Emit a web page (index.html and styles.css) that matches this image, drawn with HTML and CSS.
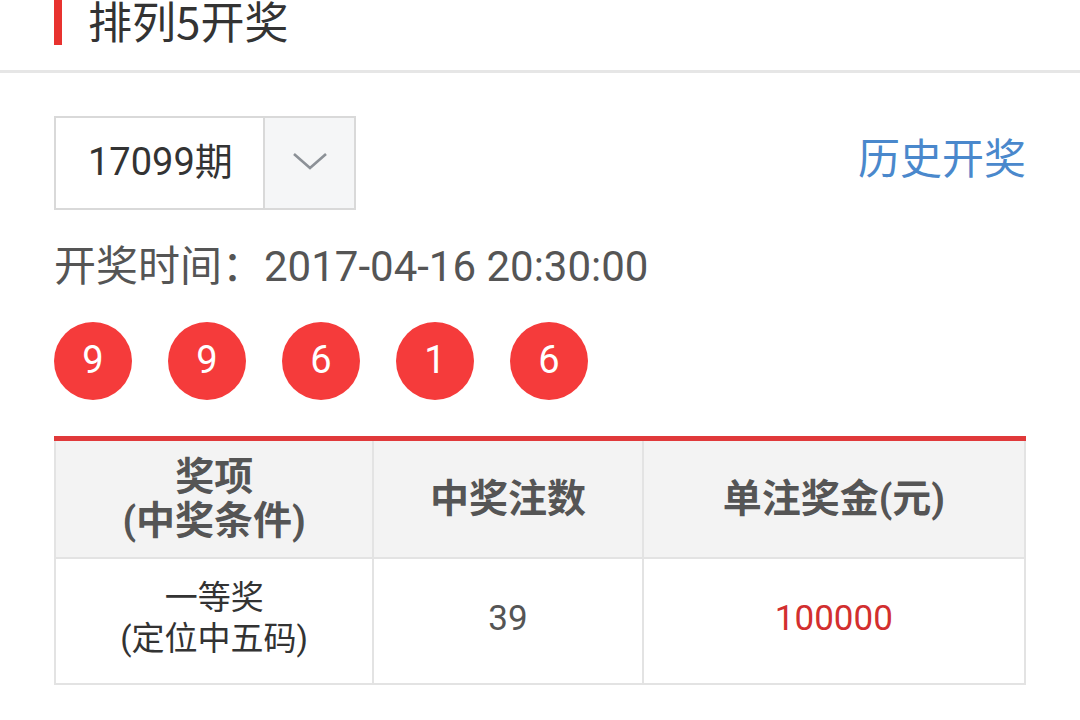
FILE: index.html
```html
<!DOCTYPE html>
<html lang="zh-CN">
<head>
<meta charset="utf-8">
<title>排列5开奖</title>
<link rel="stylesheet" href="styles.css">
</head>
<body>
<header class="head">
  <span class="head-bar"></span>
  <h1 class="head-title">排列5开奖</h1>
</header>
<main class="content">
  <div class="toolbar">
    <div class="select">
      <span class="select-value">17099期</span>
      <span class="select-btn">
        <svg width="36" height="20" viewBox="0 0 36 20"><path d="M2 3 L18 17 L34 3" fill="none" stroke="#8c9197" stroke-width="2.6"/></svg>
      </span>
    </div>
    <a class="history">历史开奖</a>
  </div>
  <p class="time">开奖时间：2017-04-16 20:30:00</p>
  <div class="balls">
    <span class="ball">9</span>
    <span class="ball">9</span>
    <span class="ball">6</span>
    <span class="ball">1</span>
    <span class="ball">6</span>
  </div>
  <table class="prize">
    <colgroup>
      <col class="c1"><col class="c2"><col class="c3">
    </colgroup>
    <thead>
      <tr><th>奖项<br>(中奖条件)</th><th>中奖注数</th><th>单注奖金(元)</th></tr>
    </thead>
    <tbody>
      <tr><td class="cell-name">一等奖<br>(定位中五码)</td><td class="cell-count">39</td><td class="cell-money">100000</td></tr>
    </tbody>
  </table>
</main>
</body>
</html>
```
FILE: styles.css
```css
html, body {
  margin: 0;
  padding: 0;
  background: #ffffff;
  font-family: Roboto, "Noto Sans CJK SC", sans-serif;
  color: #333333;
}
.head {
  display: flex;
  align-items: flex-start;
  height: 45px;
  padding: 0 0 25px 54px;
  border-bottom: 3px solid #e6e6e6;
}
.head-bar {
  width: 8px;
  height: 45px;
  background: #e8322f;
}
.head-title {
  margin: 0 0 0 26px;
  font-family: "Noto Sans CJK SC", sans-serif;
  font-weight: 400;
  font-size: 44px;
  line-height: 40px;
  color: #333333;
}
.content {
  padding: 43px 54px 0 54px;
}
.toolbar {
  display: flex;
  justify-content: space-between;
  align-items: center;
}
.select {
  display: flex;
  height: 90px;
  border: 2px solid #d9d9d9;
  width: 298px;
}
.select-value {
  width: 209px;
  border-right: 2px solid #d9d9d9;
  display: flex;
  align-items: center;
  padding-left: 32px;
  padding-bottom: 10px;
  box-sizing: border-box;
  font-size: 38px;
  color: #333333;
}
.select-btn {
  flex: 1;
  background: #f5f6f7;
  display: flex;
  align-items: center;
  justify-content: center;
  padding-bottom: 4px;
}
.history {
  font-family: "Noto Sans CJK SC", sans-serif;
  font-size: 42px;
  line-height: 50px;
  color: #4a88cc;
  margin-bottom: 14px;
}
.time {
  margin: 29px 0 0 0;
  font-size: 42px;
  line-height: 56px;
  color: #555555;
}
.balls {
  display: flex;
  gap: 36px;
  margin-top: 27px;
}
.ball {
  width: 78px;
  height: 78px;
  border-radius: 50%;
  background: #f53b3b;
  color: #ffffff;
  font-size: 38px;
  display: flex;
  align-items: center;
  justify-content: center;
  padding-bottom: 2px;
  box-sizing: border-box;
}
.prize {
  margin-top: 36px;
  width: 972px;
  border-collapse: collapse;
  border-top: 5px solid #e0393a;
}
.c1 { width: 319px; }
.c2 { width: 270px; }
.c3 { width: 383px; }
.prize th, .prize td {
  border: 2px solid #e3e3e3;
  text-align: center;
  padding: 0;
}
.prize th {
  background: #f3f3f3;
  font-weight: 700;
  font-size: 39px;
  line-height: 44px;
  color: #555555;
  height: 116px;
}
.prize td {
  height: 118px;
  padding-bottom: 6px;
  font-size: 33px;
  line-height: 41px;
  color: #333333;
}
.prize td.cell-count {
  font-size: 35px;
  color: #555555;
}
.prize td.cell-money {
  font-size: 35px;
  color: #d22f2f;
}
```
